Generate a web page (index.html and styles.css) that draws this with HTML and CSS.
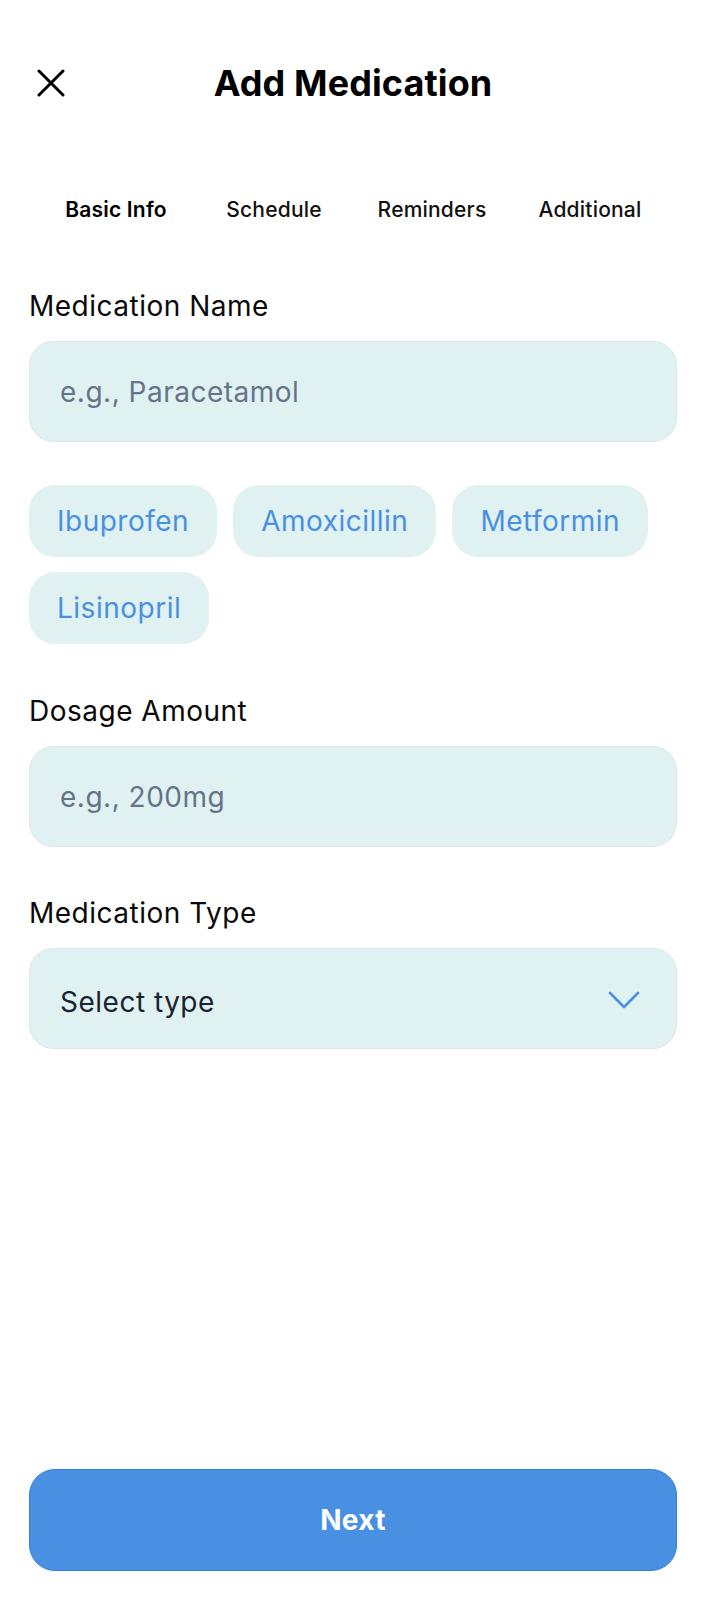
FILE: index.html
```html
<!DOCTYPE html>
<html lang="en">
<head>
<meta charset="utf-8">
<title>Add Medication</title>
<link rel="stylesheet" href="styles.css">
</head>
<body>
<div class="screen">
  <header class="header">
    <button class="close" aria-label="Close">
      <svg width="28" height="28" viewBox="0 0 28 28"><path d="M2 2 L26 26 M26 2 L2 26" stroke="#000" stroke-width="3" stroke-linecap="round" fill="none"/></svg>
    </button>
    <h1 class="title">Add Medication</h1>
    <div class="spacer"></div>
  </header>

  <nav class="tabs">
    <span class="tab active">Basic Info</span>
    <span class="tab">Schedule</span>
    <span class="tab">Reminders</span>
    <span class="tab">Additional</span>
  </nav>

  <main class="form">
    <label class="label">Medication Name</label>
    <div class="field placeholder">e.g., Paracetamol</div>

    <div class="chips">
      <span class="chip">Ibuprofen</span>
      <span class="chip">Amoxicillin</span>
      <span class="chip">Metformin</span>
      <span class="chip">Lisinopril</span>
    </div>

    <label class="label">Dosage Amount</label>
    <div class="field placeholder">e.g., 200mg</div>

    <label class="label">Medication Type</label>
    <div class="field select">
      <span class="select-text">Select type</span>
      <svg width="32" height="18" viewBox="0 0 32 18"><path d="M2 2 L16 16 L30 2" stroke="#4A90E2" stroke-width="2.6" stroke-linecap="round" stroke-linejoin="round" fill="none"/></svg>
    </div>
  </main>

  <button class="next">Next</button>
</div>
</body>
</html>
```

FILE: styles.css
```css
* { box-sizing: border-box; }
html, body { margin: 0; padding: 0; background: #fff; }
body { font-family: Inter, "Noto Sans", sans-serif; color: #000; }

.screen {
  min-height: 1600px;
  display: flex;
  flex-direction: column;
  padding: 59px 29px 29px;
}

.header {
  display: grid;
  grid-template-columns: 1fr auto 1fr;
  align-items: center;
  height: 48px;
}
.close {
  justify-self: start;
  border: 0;
  background: none;
  padding: 0;
  margin-left: 8px;
  width: 28px;
  height: 28px;
  display: flex;
}
.title {
  margin: 0;
  font-size: 36px;
  font-weight: 700;
  letter-spacing: 0.1px;
}

.tabs {
  margin-top: 78px;
  height: 48px;
  display: grid;
  grid-template-columns: repeat(4, 1fr);
  align-items: center;
  padding: 0 8px;
  justify-items: center;
}
.tab {
  font-size: 21px;
  font-weight: 500;
  letter-spacing: 0.2px;
  color: #111;
}
.tab.active { font-weight: 600; color: #000; }

.form { display: flex; flex-direction: column; }

.label {
  display: block;
  font-size: 28px;
  line-height: 32px;
  letter-spacing: 0.5px;
  color: #0a0a0a;
  margin-top: 57px;
  margin-bottom: 19px;
}

.field {
  height: 101px;
  background: #E0F1F1;
  border: 1.5px solid #dfe7ee;
  border-radius: 24px;
  display: flex;
  align-items: center;
  padding: 0 30px;
  font-size: 28px;
  letter-spacing: 0.5px;
}
.placeholder { color: #64748b; }
.select { justify-content: space-between; color: #1a2233; padding-right: 36px; }
.select-text { padding-top: 7px; }
.select svg { margin-top: 3px; }

.chips {
  display: flex;
  flex-wrap: wrap;
  gap: 15px 16px;
  margin-top: 43px;
}
.chip {
  height: 72px;
  display: flex;
  align-items: center;
  padding: 0 28px;
  background: #E0F1F1;
  border-radius: 26px;
  color: #4A90E2;
  font-size: 28px;
  letter-spacing: 0.5px;
}
.chips + .label { margin-top: 51px; }
.field + .label { margin-top: 50px; }

.next {
  margin-top: auto;
  height: 102px;
  width: 100%;
  background: #4A90E2;
  border: 1.5px solid #2f7fe0;
  border-radius: 26px;
  color: #fff;
  font-family: inherit;
  font-size: 28px;
  font-weight: 700;
  letter-spacing: 0.3px;
}
```
